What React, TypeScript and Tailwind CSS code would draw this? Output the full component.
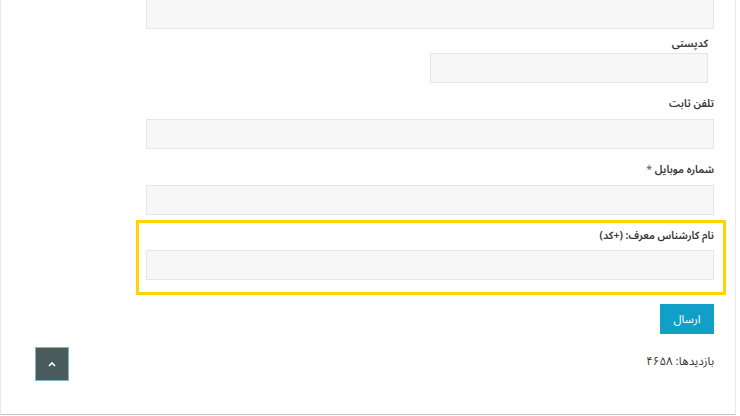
import React from "react";

const inputCls =
  "block h-[30px] w-full bg-[#f7f7f7] border border-[#e6e6e6]";
const labelCls =
  "block h-[18px] leading-[18px] text-[10.5px] font-semibold text-[#333333]";

export default function App() {
  return (
    <div className="relative w-[740px] h-[416px] overflow-hidden bg-white font-['Noto_Sans_Arabic','Noto_Naskh_Arabic','DejaVu_Sans',sans-serif]">
      <div className="w-[736px] h-[415px] border-l border-r border-[#e8e8e8] border-b border-b-[#b9ccd3]">
        <div dir="rtl" className="pr-[21px] pl-[145px] flex flex-col">
          <div className={inputCls + " -mt-px"} />

          <div className="mr-[6px] w-[278px]">
            <label className={labelCls + " mt-[6px]"}>کدپستی</label>
            <div className={inputCls} />
          </div>

          <label className={labelCls + " mt-[12px]"}>تلفن ثابت</label>
          <div className={inputCls + " mt-[6px]"} />

          <label className={labelCls + " mt-[12px]"}>
            شماره موبایل <span className="font-normal text-[#555555]">*</span>
          </label>
          <div className={inputCls + " mt-[6px]"} />

          <div className="mt-[5px] -mr-[12px] -ml-[10px] border-[3px] border-[#ffd400] pt-[4px] pb-[12px] pr-[9px] pl-[7px]">
            <label className={labelCls}>نام کارشناس معرف: (+کد)</label>
            <div className={inputCls + " mt-[5px]"} />
          </div>

          <div className="mt-[9px] flex">
            <button className="h-[30px] w-[54px] bg-[#129fc7] text-white text-[11.5px] leading-[30px]">
              ارسال
            </button>
          </div>

          <div className="mt-[18px] h-[18px] leading-[18px] text-[11.5px] text-[#333333]">
            بازدیدها: ۴۶۵۸
          </div>
        </div>
      </div>

      <button className="absolute left-[35px] top-[347px] w-[34px] h-[34px] bg-[#4a5b5e] border border-[#7fb7c8] flex items-center justify-center">
        <svg width="8" height="6" viewBox="0 0 8 6">
          <path d="M1 5 L4 2 L7 5" stroke="white" strokeWidth="1.6" fill="none" />
        </svg>
      </button>
    </div>
  );
}
